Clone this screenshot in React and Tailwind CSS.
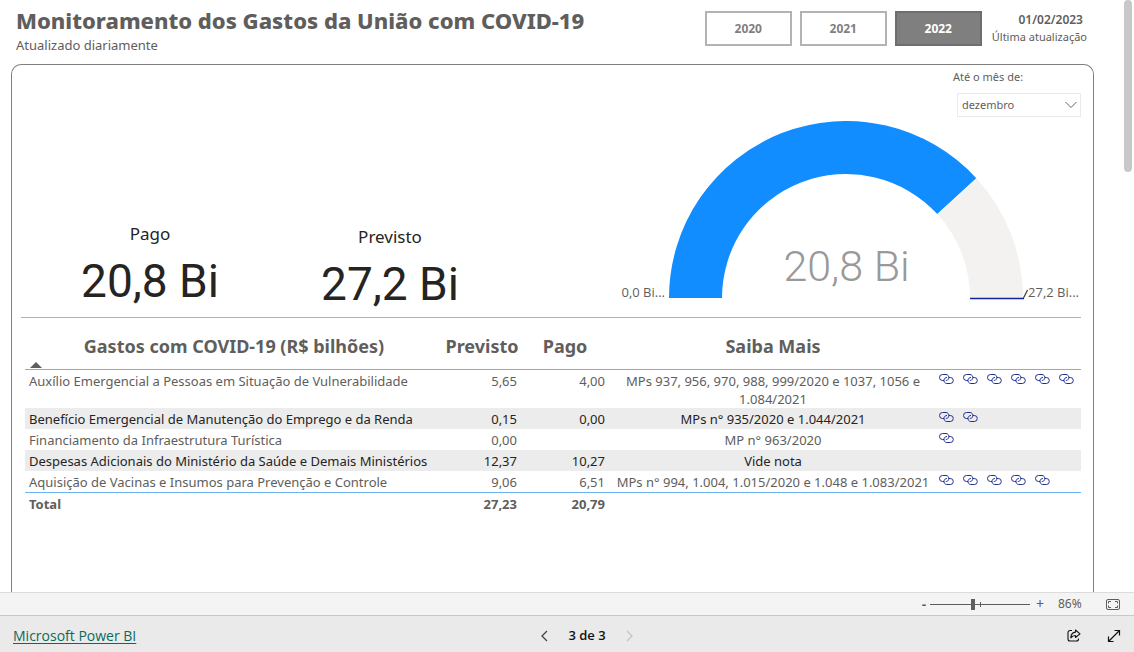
import { useState } from 'react'

const YEARS = ['2020', '2021', '2022']

const MONTHS = [
  'janeiro', 'fevereiro', 'março', 'abril', 'maio', 'junho',
  'julho', 'agosto', 'setembro', 'outubro', 'novembro', 'dezembro',
]

const LINK_COLUMNS = [0, 1, 2, 3, 4, 5]

const ROWS = [
  {
    name: 'Auxílio Emergencial a Pessoas em Situação de Vulnerabilidade',
    previsto: '5,65',
    pago: '4,00',
    info: 'MPs 937, 956, 970, 988, 999/2020 e 1037, 1056 e 1.084/2021',
    links: 6,
  },
  {
    name: 'Benefício Emergencial de Manutenção do Emprego e da Renda',
    previsto: '0,15',
    pago: '0,00',
    info: 'MPs n° 935/2020 e 1.044/2021',
    links: 2,
  },
  {
    name: 'Financiamento da Infraestrutura Turística',
    previsto: '0,00',
    pago: '',
    info: 'MP n° 963/2020',
    links: 1,
  },
  {
    name: 'Despesas Adicionais do Ministério da Saúde e Demais Ministérios',
    previsto: '12,37',
    pago: '10,27',
    info: 'Vide nota',
    links: 0,
  },
  {
    name: 'Aquisição de Vacinas e Insumos para Prevenção e Controle',
    previsto: '9,06',
    pago: '6,51',
    info: 'MPs n° 994, 1.004, 1.015/2020 e 1.048 e 1.083/2021',
    links: 5,
  },
]

function LinkIcon() {
  return (
    <svg width="15" height="10" viewBox="0 0 15 10" fill="none" stroke="#1f2f8f" strokeWidth="1">
      <path d="M5 6.500H3.500A3 3 0 0 1 3.500 0.500H7A3 3 0 0 1 9.800 4.200C9.400 5.800 8.200 6.500 6.800 6.500" />
      <path d="M10 3.500H11.300A3 3 0 0 1 11.300 9.500H7.800A3 3 0 0 1 5 5.800C5.400 4.300 6.600 3.500 8 3.500" />
    </svg>
  )
}

// ponto no arco, com a fração indo de 0 (esquerda) a 1 (direita)
function arcPoint(radius, fraction) {
  const angle = Math.PI * (1 - fraction)
  return `${177 + radius * Math.cos(angle)} ${177 - radius * Math.sin(angle)}`
}

function ring(from, to) {
  return `M${arcPoint(177, from)}A177 177 0 0 1 ${arcPoint(177, to)}L${arcPoint(124, to)}A124 124 0 0 0 ${arcPoint(124, from)}Z`
}

function Gauge({ value, max }) {
  const fraction = value / max
  return (
    <div className="mt-1 flex items-end justify-end pr-[2px] font-['Open_Sans',sans-serif] text-[13px] leading-4">
      <span className="mr-1">0,0 Bi...</span>
      <div className="relative">
        <svg width="359" height="179" viewBox="0 0 359 179">
          <path d={ring(0, fraction)} fill="#118dff" />
          <path d={ring(fraction, 1)} fill="#f3f2f1" />
          <path d="M301 177.5H355" stroke="#12239e" strokeWidth="1.5" />
          <path d="M354.5 177L358.5 169" stroke="#444444" strokeWidth="1.3" />
        </svg>
        <span className="absolute inset-x-0 bottom-2 pr-1 text-center font-[Roboto] text-[43px] leading-[52px] font-light text-[#999999]">
          20,8 Bi
        </span>
      </div>
      <span>27,2 Bi...</span>
    </div>
  )
}

function Card({ label, value }) {
  return (
    <div className="w-60 text-center text-[#252423]">
      <p className="text-[17px] leading-6">{label}</p>
      <p className="mt-[9px] font-[Roboto] text-[46px] leading-[52px]">{value}</p>
    </div>
  )
}

function Header({ year, onYear }) {
  return (
    <header className="flex h-16 items-start pr-[7px] pl-4">
      <div className="flex-1">
        <h1 className="pt-1 text-[22px] leading-8 font-extrabold whitespace-nowrap">
          Monitoramento dos Gastos da União com COVID-19
        </h1>
        <p className="text-[13px] leading-[18px]">Atualizado diariamente</p>
      </div>
      <div className="flex gap-2 pt-[11px]">
        {YEARS.map((y) => (
          <button
            key={y}
            onClick={() => onYear(y)}
            className={`h-[35px] w-[87px] border-2 text-xs font-bold ${
              y === year
                ? 'border-[#6e6e6e] bg-[#7f7f7f] text-white'
                : 'border-[#b3b3b3] bg-white text-[#7f7f7f]'
            }`}
          >
            {y}
          </button>
        ))}
      </div>
      <div className="ml-[10px] pt-3 text-right leading-4">
        <p className="pr-1 text-xs font-semibold">01/02/2023</p>
        <p className="text-[11px] leading-[18px] whitespace-nowrap">Última atualização</p>
      </div>
    </header>
  )
}

function MonthSlicer() {
  return (
    <div className="flex w-[128px] flex-col self-end pt-1 text-[11px]">
      <label htmlFor="mes" className="leading-4">Até o mês de:</label>
      <div className="relative mt-2 ml-1">
        <select
          id="mes"
          defaultValue="dezembro"
          className="h-6 w-full appearance-none border border-[#eaeaea] bg-white pt-px pl-1"
        >
          {MONTHS.map((m) => (
            <option key={m}>{m}</option>
          ))}
        </select>
        <svg className="pointer-events-none absolute top-2 right-1" width="12" height="8" viewBox="0 0 12 8" fill="none" stroke="#7a5a50">
          <path d="M0.5 1L6 6.5L11.5 1" />
        </svg>
      </div>
    </div>
  )
}

function SpendingTable() {
  return (
    <table className="mt-3 w-full table-fixed text-[13px] leading-[18px]">
      <colgroup>
        <col className="w-[418px]" />
        <col className="w-[78px]" />
        <col className="w-[88px]" />
        <col />
        {LINK_COLUMNS.map((c) => (
          <col key={c} className="w-6" />
        ))}
      </colgroup>
      <thead>
        <tr className="border-b border-[#6cb2f5] align-top text-lg leading-8">
          <th>
            Gastos com COVID-19 (R$ bilhões)
            <svg className="-mt-px ml-1 block" width="14" height="8" viewBox="0 0 14 8" fill="#605e5c">
              <path d="M1 7L7 1L13 7Z" />
            </svg>
          </th>
          <th>Previsto</th>
          <th>Pago</th>
          <th>Saiba Mais</th>
          <th colSpan={6} />
        </tr>
      </thead>
      <tbody className="border-b border-[#6cb2f5]">
        {ROWS.map((row) => (
          <tr key={row.name} className="h-[21px] align-top even:bg-[#ececec] even:text-[#252423]">
            <td className="px-1 pt-[2px] whitespace-nowrap">{row.name}</td>
            <td className="px-1 pt-[2px] text-right">{row.previsto}</td>
            <td className="px-1 pt-[2px] text-right">{row.pago}</td>
            <td className="px-1 pt-[2px] text-center">{row.info}</td>
            {LINK_COLUMNS.map((c) => (
              <td key={c} className="pt-1 pl-[2px]">
                {c < row.links && (
                  <a href="#" aria-label={`Link ${c + 1}`} className="block">
                    <LinkIcon />
                  </a>
                )}
              </td>
            ))}
          </tr>
        ))}
      </tbody>
      <tfoot>
        <tr className="font-bold">
          <td className="px-1 pt-[2px]">Total</td>
          <td className="px-1 pt-[2px] text-right">27,23</td>
          <td className="px-1 pt-[2px] text-right">20,79</td>
          <td colSpan={7} />
        </tr>
      </tfoot>
    </table>
  )
}

function ZoomBar() {
  const [zoom, setZoom] = useState(86)
  return (
    <div className="flex h-[23px] items-center justify-end border-t border-[#dcdcdc] bg-[#f4f4f4] pr-[14px] text-xs">
      <button aria-label="Reduzir" className="w-3 text-sm leading-4 font-semibold">-</button>
      <div className="relative flex w-[100px] items-center">
        <input
          type="range"
          aria-label="Zoom"
          min="0"
          max="200"
          value={zoom}
          onChange={(e) => setZoom(Number(e.target.value))}
          className="h-px w-full appearance-none bg-[#605e5c] [&::-webkit-slider-thumb]:h-[11px] [&::-webkit-slider-thumb]:w-1 [&::-webkit-slider-thumb]:appearance-none [&::-webkit-slider-thumb]:bg-[#605e5c]"
        />
        <span className="absolute left-1/2 h-[5px] w-px bg-[#605e5c]" />
      </div>
      <button aria-label="Ampliar" className="w-5 text-sm leading-4">+</button>
      <span className="w-9 pl-2">{zoom}%</span>
      <button aria-label="Ajustar à página" className="ml-5">
        <svg width="14" height="11" viewBox="0 0 14 11" fill="none" stroke="#605e5c">
          <rect x="0.5" y="0.5" width="13" height="10" rx="1.5" />
          <path d="M5 2.5H2.5V4.5M9 2.5H11.5V4.5M5 8.5H2.5V6.5M9 8.5H11.5V6.5" />
        </svg>
      </button>
    </div>
  )
}

function Footer() {
  return (
    <footer className="grid h-[37px] grid-cols-3 items-center border-t border-[#c8c8c8] bg-[#eaeaea] px-[13px] pt-[3px] font-['Open_Sans',sans-serif]">
      <a href="#" className="justify-self-start text-sm text-[#0b6a5c] underline underline-offset-2">
        Microsoft Power BI
      </a>
      <nav className="flex items-center justify-center gap-5 pl-10 text-[13px] font-semibold text-[#111111]">
        <button aria-label="Página anterior">
          <svg width="7" height="12" viewBox="0 0 7 12" fill="none" stroke="#444444" strokeWidth="1.3">
            <path d="M6 1L1 6L6 11" />
          </svg>
        </button>
        <span>3 de 3</span>
        <button aria-label="Próxima página" disabled>
          <svg width="7" height="12" viewBox="0 0 7 12" fill="none" stroke="#c4c4c4" strokeWidth="1.3">
            <path d="M1 1L6 6L1 11" />
          </svg>
        </button>
      </nav>
      <div className="flex items-center justify-end gap-[26px]">
        <button aria-label="Compartilhar">
          <svg width="14" height="13" viewBox="0 0 14 13" fill="none" stroke="#111111" strokeWidth="1.1" strokeLinejoin="round">
            <path d="M5 1.5H3A2 2 0 0 0 1 3.5V10A2 2 0 0 0 3 12H9.500A2 2 0 0 0 11.500 10V9.500" />
            <path d="M8.500 1L13 4.800L8.500 8.500V6.500C6.500 6.500 5 7.200 3.800 8.800C4 5.500 5.500 3.300 8.500 3.100Z" />
          </svg>
        </button>
        <button aria-label="Tela cheia">
          <svg width="14" height="14" viewBox="0 0 14 14" fill="none" stroke="#111111" strokeWidth="1.2">
            <path d="M1.500 12.500L12.500 1.500M7.500 1.500H12.500V6.500M1.500 7.500V12.500H6.500" />
          </svg>
        </button>
      </div>
    </footer>
  )
}

export default function App() {
  const [year, setYear] = useState('2022')

  return (
    <div className="flex h-screen flex-col bg-white font-['Noto_Sans',sans-serif] text-[#605e5c]">
      <div className="flex min-h-0 flex-1 overflow-hidden">
        <div className="flex min-w-0 flex-1 flex-col">
          <Header year={year} onYear={setYear} />
          <main className="ml-[11px] flex-1 rounded-t-[10px] border border-b-0 border-[#7f7f7f] pr-3 pl-[9px]">
            <div className="flex justify-between border-b border-[#b3b3b3]">
              <div className="flex pl-[9px]">
                <div className="pt-[157px]">
                  <Card label="Pago" value="20,8 Bi" />
                </div>
                <div className="pt-40">
                  <Card label="Previsto" value="27,2 Bi" />
                </div>
              </div>
              <div className="flex flex-col pb-[17px]">
                <MonthSlicer />
                <Gauge value={20.79} max={27.23} />
              </div>
            </div>
            <div className="pl-1">
              <SpendingTable />
            </div>
          </main>
        </div>
        <div className="w-10 pr-[2px]">
          <div className="ml-auto h-[172px] w-2 rounded-full bg-[#c8c8c8]" />
        </div>
      </div>
      <ZoomBar />
      <Footer />
    </div>
  )
}
